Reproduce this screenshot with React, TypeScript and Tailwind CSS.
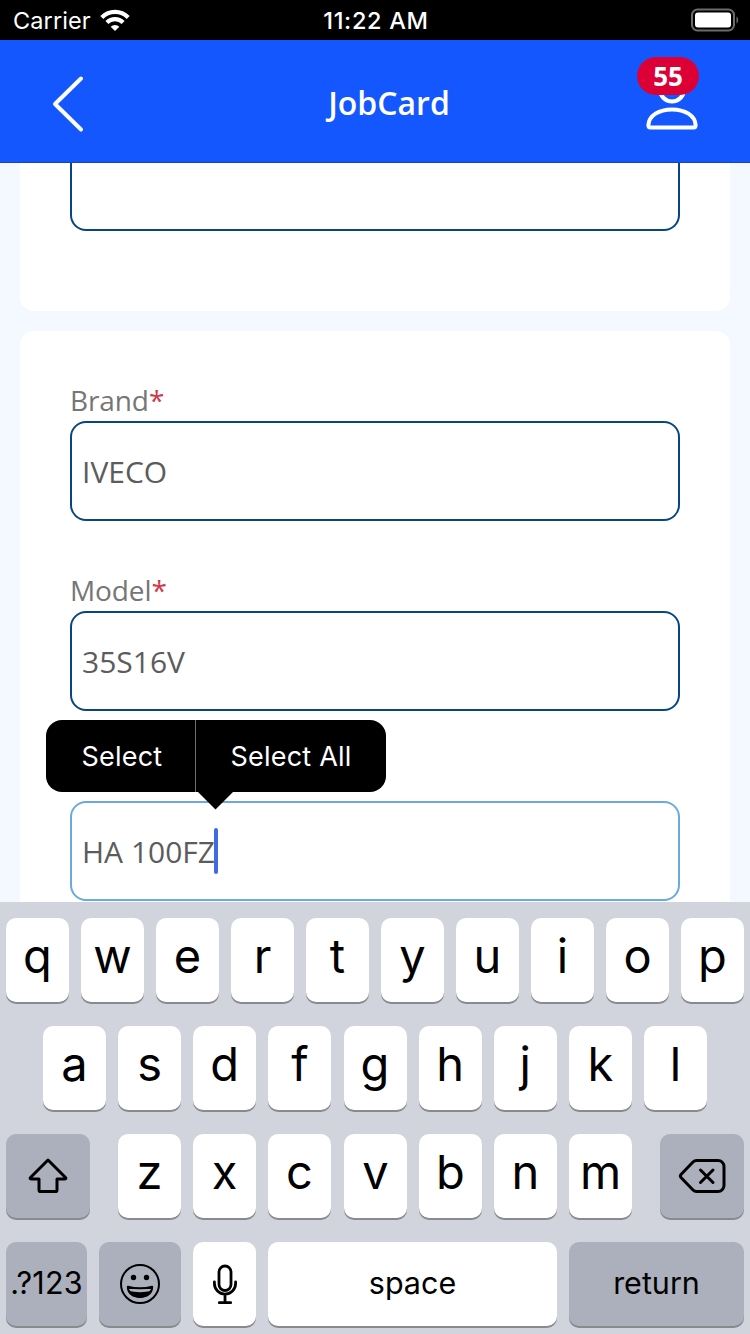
import type { ReactNode } from "react";

function StatusBar() {
  return (
    <div className="grid h-10 grid-cols-3 items-center bg-black pl-[13px] pr-[11px] font-['Inter',sans-serif] text-white">
      <div className="flex items-center gap-[9px]">
        <span className="pt-px text-[23.5px] leading-10 tracking-[0.1px]">Carrier</span>
        <svg className="-mt-[2px]" width="30" height="24" viewBox="0 0 30 24" fill="none" stroke="white" strokeWidth="4.200">
          <path d="M1.800 9.400a18.600 18.600 0 0 1 26.400 0" />
          <path d="M6.900 14.600a11.400 11.400 0 0 1 16.200 0" />
          <path d="M15 23l-4.300-4.300a6 6 0 0 1 8.600 0z" fill="white" stroke="none" />
        </svg>
      </div>
      <div className="pt-px text-center text-[23.5px] font-medium leading-10 tracking-[0.7px]">11:22 AM</div>
      <div className="flex justify-end">
        <svg className="-mt-[2px]" width="48" height="24" viewBox="0 0 48 24">
          <rect x="1" y="1.500" width="42" height="21" rx="5.500" fill="none" stroke="#6b6b6b" strokeWidth="2" />
          <rect x="4" y="4.500" width="36" height="15" rx="3" fill="white" />
          <path d="M45.500 8.500c2.200 1.200 2.200 5.800 0 7z" fill="#6b6b6b" />
        </svg>
      </div>
    </div>
  );
}

function Header() {
  return (
    <header className="flex h-[123px] items-center justify-between border-b border-[#1b45b5] bg-[#1457ff] pl-[50px] pr-[50px] text-white">
      <svg className="mt-[5px]" width="36" height="60" viewBox="0 0 36 60" fill="none" stroke="white" strokeWidth="4" strokeLinecap="round" strokeLinejoin="round">
        <path d="M31 4.500L5 30l26 25.500" />
      </svg>
      <h1 className="pl-[48px] pt-[3px] text-[32px] font-semibold leading-[44px]">JobCard</h1>
      <div className="relative">
        <svg width="56" height="76" viewBox="0 0 56 76" fill="none" stroke="white" strokeWidth="4" strokeLinejoin="round">
          <circle cx="28" cy="26.500" r="12" />
          <path d="M6.400 64.500C5 64.500 4.400 63.500 4.400 62C5 52.500 15 46.500 28 46.500s23 6 23.600 15.500c0 1.500-.6 2.500-2 2.500z" />
        </svg>
        <span className="absolute -left-[7px] -top-[6px] flex h-[38px] w-[62px] items-center justify-center rounded-full bg-[#dc0036] pb-px text-[26px] font-bold leading-none">
          55
        </span>
      </div>
    </header>
  );
}

function Field({ label, value, focused }: { label?: string; value: string; focused?: boolean }) {
  return (
    <div className="mb-12">
      <div className="h-[42px] text-[28px] leading-[42px] tracking-[-0.1px] text-[#767676]">
        {label && (
          <>
            {label}
            <span className="text-[#d0384b]">*</span>
          </>
        )}
      </div>
      <div
        className={`flex h-[100px] items-center rounded-[16px] border-2 bg-white pl-[10px] text-[30px] text-[#5c5c5c] ${
          focused ? "border-[#6aaade]" : "border-[#084683]"
        }`}
      >
        {value}
        {focused && <span className="-ml-px -mt-px h-[46px] w-1 rounded-full bg-[#4169e1]" />}
      </div>
    </div>
  );
}

function EditMenu() {
  return (
    <div className="absolute left-[46px] top-[557px] flex h-[72px] w-[340px] rounded-[16px] bg-black pt-[2px] font-['Inter',sans-serif] text-[27px] tracking-[0.2px] text-white">
      <div className="-mt-[2px] flex w-[150px] items-center justify-center border-r border-[#6e6e6e] pl-[3px] pt-[2px]">Select</div>
      <div className="flex flex-1 items-center justify-center">Select All</div>
      <svg className="absolute left-[151px] top-[71px]" width="37" height="19" viewBox="0 0 37 19">
        <path d="M0 0h37L18.500 18.500z" fill="black" />
      </svg>
    </div>
  );
}

function Key({ children, width = "w-[63px]", dark }: { children: ReactNode; width?: string; dark?: boolean }) {
  return (
    <div
      className={`flex h-[84px] shrink-0 items-center justify-center rounded-[10px] shadow-[0_2px_0_#898a8d] ${width} ${
        dark ? "bg-[#abb0bc]" : "bg-white"
      }`}
    >
      {children}
    </div>
  );
}

function Letters({ letters }: { letters: string }) {
  return (
    <>
      {letters.split("").map((c) => (
        <Key key={c}>
          <span className="pb-2 text-[47px] font-[370] leading-[76px]">{c}</span>
        </Key>
      ))}
    </>
  );
}

function Keyboard() {
  return (
    <div className="flex h-[432px] flex-col gap-6 bg-[#d1d4dc] px-[6px] pt-4 font-['Inter',sans-serif] text-black">
      <div className="flex justify-between">
        <Letters letters="qwertyuiop" />
      </div>
      <div className="flex justify-between px-[37px]">
        <Letters letters="asdfghjkl" />
      </div>
      <div className="flex justify-between">
        <Key width="w-[84px]" dark>
          <svg width="42" height="38" viewBox="0 0 42 38" fill="none" stroke="black" strokeWidth="3" strokeLinejoin="round">
            <path d="M21 3L3.500 20.500c-.7.700-.4 1.500.5 1.500H12v11c0 1 .6 1.600 1.600 1.600h14.800c1 0 1.600-.6 1.600-1.600V22h8c.9 0 1.200-.8.500-1.500z" />
          </svg>
        </Key>
        <div className="flex w-[514px] gap-3">
          <Letters letters="zxc" />
          <div className="ml-px flex gap-3">
            <Letters letters="vbnm" />
          </div>
        </div>
        <Key width="w-[84px]" dark>
          <svg width="48" height="36" viewBox="0 0 48 36" fill="none" stroke="black" strokeWidth="3" strokeLinecap="round" strokeLinejoin="round">
            <path d="M18.500 2.500H40a6 6 0 0 1 6 6v19a6 6 0 0 1-6 6H18.500c-1.500 0-2.500-.5-3.500-1.500L3 19.500c-.9-1-.9-2 0-3L15 4c1-1 2-1.500 3.500-1.500z" />
            <path d="M22.500 12l12.500 12.500M35 12L22.500 24.500" />
          </svg>
        </Key>
      </div>
      <div className="flex gap-3">
        <Key width="w-[81px]" dark>
          <span className="pb-[3px] text-[30.5px] leading-[81px] tracking-[0.2px]">.?123</span>
        </Key>
        <Key width="w-[82px]" dark>
          <svg width="42" height="42" viewBox="0 0 42 42" fill="none" stroke="black" strokeWidth="2">
            <circle cx="21" cy="21" r="19" />
            <circle cx="14.500" cy="14.500" r="2.700" fill="black" stroke="none" />
            <circle cx="27.500" cy="14.500" r="2.700" fill="black" stroke="none" />
            <path d="M8.800 23.700c7.500 2 16.900 2 24.400 0c0 6-4.500 10.300-12.200 10.300S8.800 29.700 8.800 23.700z" strokeLinejoin="round" />
            <path d="M9.500 27.500c6 2.300 17 2.300 23 0c-1 4.500-6 7-11.500 7s-10.500-2.500-11.500-7z" fill="black" stroke="none" />
          </svg>
        </Key>
        <Key>
          <svg width="26" height="42" viewBox="0 0 26 42" fill="none" stroke="black" strokeWidth="2.800" strokeLinecap="round">
            <rect x="7" y="3" width="12" height="24.500" rx="6" />
            <path d="M2.400 19v1.500a10.600 10.600 0 0 0 21.200 0V19M13 31.500v7M7.300 39.700h11.400" />
          </svg>
        </Key>
        <Key width="w-[289px]">
          <span className="pb-[3px] text-[30.5px] leading-[81px]">space</span>
        </Key>
        <Key width="w-[175px]" dark>
          <span className="pb-[3px] text-[30.5px] leading-[81px]">return</span>
        </Key>
      </div>
    </div>
  );
}

export default function App() {
  return (
    <div className="flex h-[1334px] w-[750px] flex-col overflow-hidden font-['Open_Sans','Noto_Sans',sans-serif]">
      <StatusBar />
      <Header />
      <main className="relative h-[739px] bg-[#f4f8ff] px-5">
        <div className="flex h-full flex-col gap-5 overflow-hidden">
          <section className="h-[148px] shrink-0 rounded-b-[14px] bg-white px-[50px]">
            <div className="h-[68px] rounded-b-[16px] border-2 border-t-0 border-[#084683]" />
          </section>
          <section className="shrink-0 rounded-t-[14px] bg-white px-[50px] pt-12">
            <Field label="Brand" value="IVECO" />
            <Field label="Model" value="35S16V" />
            <Field value="HA 100FZ" focused />
          </section>
        </div>
        <EditMenu />
      </main>
      <Keyboard />
    </div>
  );
}
